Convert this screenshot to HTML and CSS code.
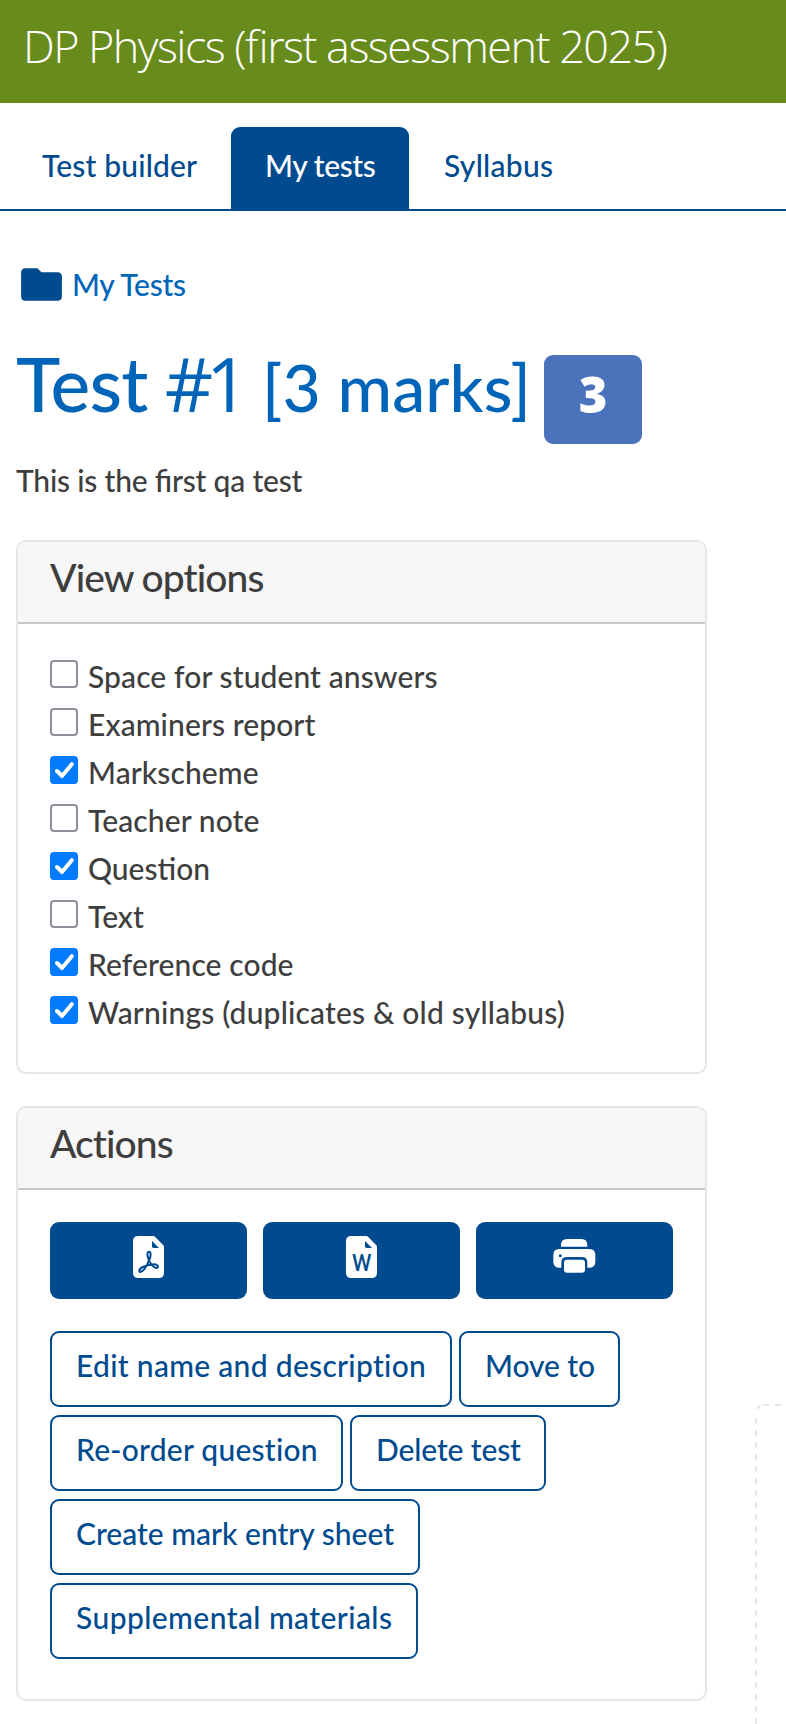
FILE: index.html
```html
<!DOCTYPE html>
<html lang="en">
<head>
<meta charset="utf-8">
<title>DP Physics</title>
<link rel="stylesheet" href="styles.css">
</head>
<body>
<header class="banner">DP Physics (first assessment 2025)</header>
<nav class="tabs">
  <a class="tab tab-builder">Test builder</a>
  <a class="tab tab-active">My tests</a>
  <a class="tab tab-syllabus">Syllabus</a>
</nav>
<div class="page">
  <main class="main">
    <div class="crumb">
      <svg class="folder" viewBox="0 0 24 24"><path d="M10 4H4c-1.100 0-2 .9-2 2v12c0 1.100.9 2 2 2h16c1.100 0 2-.9 2-2V8c0-1.100-.9-2-2-2h-8z"/></svg>
      <a>My Tests</a>
    </div>
    <div class="heading">
      <h1>Test <span class="num">#1</span></h1>
      <span class="marks">[3 marks]</span>
      <span class="badge">3</span>
    </div>
    <p class="desc">This is the first qa test</p>
    <section class="card">
      <h2 class="card-head">View options</h2>
      <ul class="options">
        <li><i class="box"></i><span class="l1">Space for student answers</span></li>
        <li><i class="box"></i><span class="l1">Examiners report</span></li>
        <li><i class="box on"><svg viewBox="0 0 28 28"><path d="M7 15l5 5L21.800 8.200"/></svg></i><span class="l1">Markscheme</span></li>
        <li><i class="box"></i><span class="l1">Teacher note</span></li>
        <li><i class="box on"><svg viewBox="0 0 28 28"><path d="M7 15l5 5L21.800 8.200"/></svg></i><span class="l0">Question</span></li>
        <li><i class="box"></i><span class="l0">Text</span></li>
        <li><i class="box on"><svg viewBox="0 0 28 28"><path d="M7 15l5 5L21.800 8.200"/></svg></i><span class="l1">Reference code</span></li>
        <li><i class="box on"><svg viewBox="0 0 28 28"><path d="M7 15l5 5L21.800 8.200"/></svg></i><span class="l2">Warnings (duplicates &amp; old syllabus)</span></li>
      </ul>
    </section>
    <section class="card">
      <h2 class="card-head">Actions</h2>
      <div class="actions">
        <div class="exports">
          <button class="solid" aria-label="PDF"><svg width="70" height="60" viewBox="0 0 210 180"><path class="w" d="M55 18h45q3 0 5 2l25 26q2 2 2 5v77q0 16-16 16H55q-16 0-16-16V34q0-16 16-16z"/><path class="b" d="M96 33v16q0 5 5 5h16z"/><path class="p" d="M87 65c7 0 6 13 0 27C80 108 69 126 61 126c-6-1-3-10 7-15 11-5 24-8 34-8 8 0 14 4 11 9-4 5-13-1-20-10C83 89 78 65 87 65z"/></svg></button>
          <button class="solid" aria-label="Word"><svg width="70" height="60" viewBox="0 0 210 180"><path class="w" d="M55 18h45q3 0 5 2l25 26q2 2 2 5v77q0 16-16 16H55q-16 0-16-16V34q0-16 16-16z"/><path class="b" d="M96 33v16q0 5 5 5h16z"/><text class="word" x="86" y="123" text-anchor="middle" textLength="57" lengthAdjust="spacingAndGlyphs">W</text></svg></button>
          <button class="solid print" aria-label="Print"><svg width="70" height="60" viewBox="0 0 210 180"><path class="w" d="M63 50v-5q0-18 18-18h43q18 0 18 18v5z"/><path class="w" d="M58 57h90q18 0 18 18v20q0 17-17 18h-7V97q0-16-17-16H81q-17 0-17 16v16h-7q-17-1-17-18V75q0-18 18-18z"/><circle class="b" cx="61" cy="77" r="4.500"/><rect class="w" x="72" y="89" width="63" height="39" rx="9"/></svg></button>
        </div>
        <div class="outlines">
          <button class="outline o1">Edit name and description</button>
          <button class="outline o2">Move to</button>
          <button class="outline o3">Re-order question</button>
          <button class="outline o4">Delete test</button>
          <button class="outline o5">Create mark entry sheet</button>
          <button class="outline o6">Supplemental materials</button>
        </div>
      </div>
    </section>
  </main>
  <aside class="dropzone">
    <svg width="31" height="320" viewBox="0 0 31 320"><path d="M1 320V8M2 5Q3 3 5.500 1.800M8 1h23"/></svg>
  </aside>
</div>
</body>
</html>
```
FILE: styles.css
```css
* { box-sizing: border-box; margin: 0; padding: 0; }
body {
  font: 500 30px/36px Lato, "Open Sans", sans-serif;
  color: #3e3e3e;
  background: #fff;
  height: 1724px;
  overflow: hidden;
  white-space: nowrap;
}
.banner {
  height: 103px;
  padding: 18px 0 0 23px;
  background: #678c1c;
  color: #fff;
  font-family: "Open Sans", sans-serif;
  font-size: 45px;
  font-weight: 300;
  font-feature-settings: "liga" 1;
  line-height: 55px;
  letter-spacing: -1.56px;
}
.tabs {
  display: flex;
  height: 84px;
  margin-top: 24px;
  border-bottom: 2px solid #004b8f;
  color: #004b8f;
}
.tab { padding-top: 20px; }
.tab-builder { width: 231px; padding-left: 42px; letter-spacing: .15px; }
.tab-active {
  width: 178px;
  padding-left: 34px;
  border-radius: 9px 9px 0 0;
  background: #004b8f;
  color: #fff;
  letter-spacing: -.4px;
}
.tab-syllabus { padding-left: 35px; letter-spacing: .28px; }
.page { display: flex; justify-content: space-between; height: 1513px; }
.main { width: 691px; margin-left: 16px; padding-top: 55px; }
.crumb {
  display: flex;
  height: 36px;
  gap: 6px;
  color: #0065b8;
  letter-spacing: -.3px;
}
.folder { width: 49px; height: 49px; margin-top: -6px; fill: #004b8f; margin-left: 1px; }
.heading { display: flex; height: 106px; margin-top: 36px; color: #0065b8; }
h1 { display: flex; gap: 17px; width: 246px; font-size: 75px; font-weight: 500; line-height: 90px; letter-spacing: -.8px; }
.num { font: 500 75px/91px "Open Sans", sans-serif; letter-spacing: -7px; }
.marks { width: 282px; font-size: 66px; line-height: 97px; letter-spacing: .1px; }
.badge {
  width: 98px;
  height: 89px;
  margin-top: 17px;
  border-radius: 9px;
  background: #4a73bb;
  color: #fff;
  font: 800 49px/79px "Open Sans", sans-serif;
  text-align: center;
}
.desc { margin-top: 18px; font-feature-settings: "liga" 1; letter-spacing: -.2px; }
.card { margin-top: 42px; border: 2px solid #e6e6e6; border-radius: 10px; }
.card + .card { margin-top: 32px; }
.card-head {
  height: 82px;
  padding: 12px 0 0 32px;
  border-bottom: 2px solid #c8c8c8;
  border-radius: 8px 8px 0 0;
  background: #f7f7f7;
  font-size: 39px;
  font-weight: 500;
  line-height: 47px;
  letter-spacing: -.95px;
}
.options { padding: 30px 32px 34px; list-style: none; }
.options li { display: flex; gap: 10px; height: 48px; padding-top: 4px; }
.box { width: 28px; height: 28px; margin-top: 2px; border: 2px solid #8f8f9d; border-radius: 4px; }
.on { border: 0; background: #007aff; }
.on svg { display: block; fill: none; stroke: #fff; stroke-width: 4; stroke-linecap: round; stroke-linejoin: round; }
.l0 { letter-spacing: 0; }
.l1 { letter-spacing: .1px; }
.l2 { letter-spacing: .18px; }
.actions { padding: 32px 32px 40px; }
.exports { display: grid; grid-template-columns: repeat(3, 1fr); gap: 16px; }
.solid {
  display: flex;
  justify-content: center;
  height: 77px;
  padding: 8px 0 0 13px;
  border: 0;
  border-radius: 9px;
  background: #004b8f;
}
.print { padding-left: 1px; }
.w { fill: #fff; }
.b { fill: #004b8f; }
.p { fill: none; stroke: #004b8f; stroke-width: 6; stroke-linejoin: round; }
.word { fill: #004b8f; font: 700 70px Lato, sans-serif; }
.outlines { display: flex; flex-wrap: wrap; gap: 8px 7px; margin-top: 32px; }
.outline {
  display: flex;
  height: 76px;
  padding: 14px 0 0 24px;
  border: 2px solid #004b8f;
  border-radius: 9px;
  background: #fff;
  color: #004b8f;
  font: 500 30px/36px Lato, sans-serif;
}
.o1 { width: 402px; letter-spacing: .3px; }
.o2 { width: 161px; letter-spacing: -.09px; }
.o3 { width: 293px; letter-spacing: .24px; }
.o4 { width: 196px; letter-spacing: -.13px; }
.o5 { width: 370px; letter-spacing: 0; }
.o6 { width: 368px; letter-spacing: .42px; }
.dropzone { width: 31px; padding-top: 1193px; }
.dropzone svg { display: block; fill: none; stroke: #e6e6e6; stroke-width: 2; stroke-dasharray: 6 6; }
```
